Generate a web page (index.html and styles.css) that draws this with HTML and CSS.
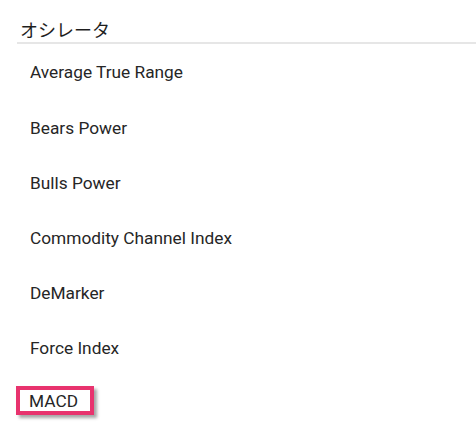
FILE: index.html
```html
<!DOCTYPE html>
<html lang="ja">
<head>
<meta charset="utf-8">
<link rel="stylesheet" href="styles.css">
</head>
<body>
<div class="panel">
  <div class="header">オシレータ</div>
  <ul class="list">
    <li class="item">Average True Range</li>
    <li class="item">Bears Power</li>
    <li class="item">Bulls Power</li>
    <li class="item">Commodity Channel Index</li>
    <li class="item">DeMarker</li>
    <li class="item">Force Index</li>
    <li class="item"><span class="highlight">MACD</span></li>
  </ul>
</div>
</body>
</html>
```

FILE: styles.css
```css
html, body {
  margin: 0;
  padding: 0;
  background: #ffffff;
}
body {
  width: 476px;
  height: 429px;
  overflow: hidden;
  font-family: Roboto, "Noto Sans CJK JP", sans-serif;
  color: #262626;
}
.panel {
  padding-left: 17px;
}
.header {
  font-family: "Noto Sans CJK JP", sans-serif;
  font-size: 18px;
  line-height: 24px;
  padding: 17px 0 1px 3px;
  border-bottom: 2px solid #e6e6e6;
  color: #1e1e1e;
}
.list {
  list-style: none;
  margin: 0;
  padding: 0;
}
.item {
  font-size: 17.3px;
  font-weight: 400;
  height: 55px;
  display: flex;
  align-items: center;
  padding-left: 13px;
}
.item:first-child {
  height: 56px;
}
.highlight {
  margin-left: -14px;
  margin-bottom: 4px;
  padding: 1px 12px 0 9px;
  border: 4px solid #e8336e;
  line-height: 20px;
  box-shadow: 3px 3px 3px rgba(0, 0, 0, 0.35);
}
```
